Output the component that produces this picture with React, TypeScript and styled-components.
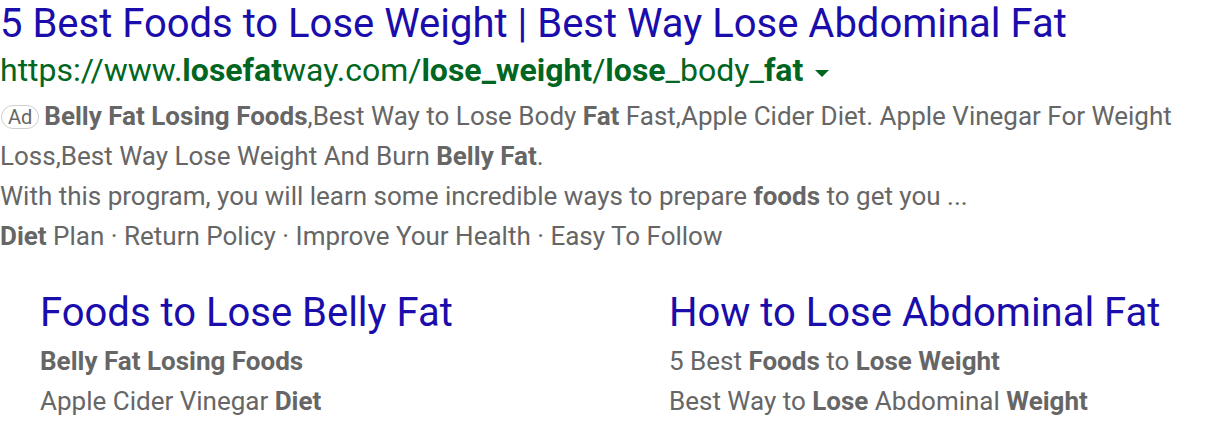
import React from "react";
import styled, { createGlobalStyle } from "styled-components";

const Global = createGlobalStyle`
  html, body { margin: 0; padding: 0; background: #fff; }
  body { font-family: Roboto, "Noto Sans", Arial, sans-serif; }
`;

const Page = styled.div`
  width: 1216px;
  height: 430px;
  overflow: hidden;
`;

const Title = styled.a`
  display: block;
  color: #1a0dab;
  font-size: 40px;
  line-height: 48px;
  text-decoration: none;
  white-space: nowrap;
`;

const Url = styled.div`
  display: flex;
  align-items: center;
  color: #006621;
  font-size: 32px;
  line-height: 44px;
  white-space: nowrap;
  margin-bottom: 4px;
  b { font-weight: 700; }
`;

const Caret = styled.span`
  display: inline-block;
  width: 0;
  height: 0;
  margin-left: 12px;
  margin-top: 6px;
  border-left: 7px solid transparent;
  border-right: 7px solid transparent;
  border-top: 7px solid #006621;
`;

const Desc = styled.div`
  color: #666;
  font-size: 26px;
  line-height: 40px;
  b { font-weight: 700; }
`;

const AdBadge = styled.span`
  display: inline-block;
  box-sizing: border-box;
  height: 24px;
  border: 1px solid #cfcfcf;
  border-radius: 12px;
  color: #666;
  font-size: 20px;
  line-height: 22px;
  padding: 0 6px;
  margin-left: 1px;
  margin-right: 5px;
  vertical-align: 1px;
`;

const Sitelinks = styled.div`
  display: grid;
  grid-template-columns: 629px 1fr;
  padding-left: 40px;
  margin-top: 33px;
`;

const Sitelink = styled.div`
  display: flex;
  flex-direction: column;
`;

const SiteTitle = styled.a`
  color: #1a0dab;
  font-size: 40px;
  line-height: 48px;
  margin-bottom: 4px;
  text-decoration: none;
  white-space: nowrap;
`;

const SiteLine = styled.div`
  color: #666;
  font-size: 26px;
  line-height: 40px;
  white-space: nowrap;
  b { font-weight: 700; }
`;

export default function App() {
  return (
    <Page>
      <Global />
      <Title href="#">5 Best Foods to Lose Weight | Best Way Lose Abdominal Fat</Title>
      <Url>
        <span>
          https://www.<b>losefat</b>way.com/<b>lose_weight</b>/<b>lose</b>_body_<b>fat</b>
        </span>
        <Caret />
      </Url>
      <Desc>
        <AdBadge>Ad</AdBadge>
        <b>Belly Fat Losing Foods</b>,Best Way to Lose Body <b>Fat</b> Fast,Apple Cider Diet. Apple Vinegar For Weight
        Loss,Best Way Lose Weight And Burn <b>Belly Fat</b>.
      </Desc>
      <Desc>
        With this program, you will learn some incredible ways to prepare <b>foods</b> to get you ...
      </Desc>
      <Desc>
        <b>Diet</b> Plan · Return Policy · Improve Your Health · Easy To Follow
      </Desc>
      <Sitelinks>
        <Sitelink>
          <SiteTitle href="#">Foods to Lose Belly Fat</SiteTitle>
          <SiteLine><b>Belly Fat Losing Foods</b></SiteLine>
          <SiteLine>Apple Cider Vinegar <b>Diet</b></SiteLine>
        </Sitelink>
        <Sitelink>
          <SiteTitle href="#">How to Lose Abdominal Fat</SiteTitle>
          <SiteLine>5 Best <b>Foods</b> to <b>Lose Weight</b></SiteLine>
          <SiteLine>Best Way to <b>Lose</b> Abdominal <b>Weight</b></SiteLine>
        </Sitelink>
      </Sitelinks>
    </Page>
  );
}
